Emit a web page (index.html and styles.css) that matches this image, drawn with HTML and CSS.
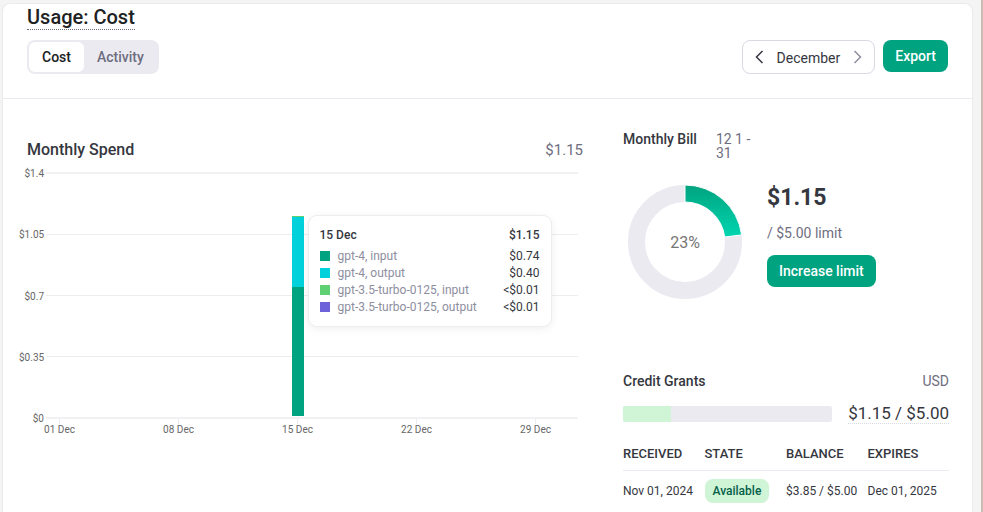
FILE: index.html
```html
<!DOCTYPE html>
<html lang="en">
<head>
  <meta charset="UTF-8" />
  <meta name="viewport" content="width=device-width, initial-scale=1" />
  <title>Usage: Cost</title>
  <link rel="stylesheet" href="styles.css">
</head>
<body>
  <main class="panel">
    <header class="page-header">
      <h1>Usage: Cost</h1>
      <div class="toolbar">
        <div class="toggle">
          <button type="button" class="active">Cost</button>
          <button type="button">Activity</button>
        </div>
        <div class="actions">
          <div class="month-picker">
            <button type="button" aria-label="Previous month">
              <svg width="9" height="14" viewBox="0 0 9 14"><path d="M7.5 1L1.5 7L7.5 13" /></svg>
            </button>
            <span>December</span>
            <button type="button" class="next" aria-label="Next month">
              <svg width="9" height="14" viewBox="0 0 9 14"><path d="M1.5 1L7.5 7L1.5 13" /></svg>
            </button>
          </div>
          <button type="button" class="btn">Export</button>
        </div>
      </div>
    </header>

    <div class="content">
      <section class="spend">
        <div class="spend-head">
          <h2>Monthly Spend</h2>
          <span>$1.15</span>
        </div>
        <div class="chart">
          <div class="y-axis">
            <span>$1.4</span>
            <span>$1.05</span>
            <span>$0.7</span>
            <span>$0.35</span>
            <span>$0</span>
          </div>
          <div class="plot">
            <div class="lines"><i></i><i></i><i></i><i></i><i></i></div>
            <div class="days">
              <div class="bar" style="height: 82%">
                <div class="seg gpt35-in" style="flex-grow: 1"></div>
                <div class="seg gpt4-out" style="flex-grow: 70"></div>
                <div class="seg gpt4-in" style="flex-grow: 130"></div>
                <div class="tooltip">
                  <div class="tooltip-head"><span>15 Dec</span><span>$1.15</span></div>
                  <ul>
                    <li><i class="gpt4-in"></i><span>gpt-4, input</span><b>$0.74</b></li>
                    <li><i class="gpt4-out"></i><span>gpt-4, output</span><b>$0.40</b></li>
                    <li><i class="gpt35-in"></i><span>gpt-3.5-turbo-0125, input</span><b>&lt;$0.01</b></li>
                    <li><i class="gpt35-out"></i><span>gpt-3.5-turbo-0125, output</span><b>&lt;$0.01</b></li>
                  </ul>
                </div>
              </div>
            </div>
          </div>
          <div class="x-axis">
            <span class="d1">01 Dec</span>
            <span class="d8">08 Dec</span>
            <span class="d15">15 Dec</span>
            <span class="d22">22 Dec</span>
            <span class="d29">29 Dec</span>
          </div>
        </div>
      </section>

      <aside class="side">
        <section class="bill">
          <div class="bill-head">
            <h3>Monthly Bill</h3>
            <span>12 1 - 31</span>
          </div>
          <div class="bill-body">
            <svg class="donut" width="124" height="124" viewBox="0 0 124 124" role="img" aria-label="23% of limit used">
              <defs>
                <linearGradient id="used" x1="0" y1="0" x2="0" y2="1">
                  <stop offset="0" stop-color="#00a37f" />
                  <stop offset="1" stop-color="#00d6b0" />
                </linearGradient>
              </defs>
              <circle cx="62" cy="62" r="48.5" fill="none" stroke="#ebeaf1" stroke-width="17" />
              <path d="M62 5A57 57 0 0 1 118.6 54.9L101.7 57A40 40 0 0 0 62 22Z" fill="url(#used)" stroke="#fff" />
              <text x="62" y="68" text-anchor="middle">23%</text>
            </svg>
            <div class="bill-info">
              <strong>$1.15</strong>
              <span>/ $5.00 limit</span>
              <button type="button" class="btn">Increase limit</button>
            </div>
          </div>
        </section>

        <section class="grants">
          <div class="grants-head">
            <h3>Credit Grants</h3>
            <span>USD</span>
          </div>
          <div class="grants-usage">
            <div class="progress"><div style="width: 23%"></div></div>
            <span>$1.15 / $5.00</span>
          </div>
          <table>
            <thead>
              <tr><th>RECEIVED</th><th>STATE</th><th>BALANCE</th><th>EXPIRES</th></tr>
            </thead>
            <tbody>
              <tr>
                <td>Nov 01, 2024</td>
                <td><span class="badge">Available</span></td>
                <td>$3.85 / $5.00</td>
                <td>Dec 01, 2025</td>
              </tr>
            </tbody>
          </table>
        </section>
      </aside>
    </div>
  </main>
</body>
</html>
```
FILE: styles.css
```css
* {
  box-sizing: border-box;
}
body {
  min-height: 100vh;
  margin: 0;
  padding: 3px 8px 0 2px;
  background: #f4f4f4;
  border-right: 2px solid #cdbab3;
  color: #353740;
  font-family: Roboto, "Liberation Sans", sans-serif;
  font-size: 14px;
  line-height: 20px;
}
h1, h2, h3, ul {
  margin: 0;
  padding: 0;
}
h1, h2, h3 {
  font-weight: 500;
}
button {
  font: inherit;
  border: none;
  cursor: pointer;
}
.panel {
  min-height: calc(100vh - 3px);
  background: #fff;
  border: 1px solid #ebebed;
  border-bottom: none;
  border-radius: 8px 8px 0 0;
}

/* header */
.page-header {
  padding: 0 24px 24px;
  border-bottom: 1px solid #ebeaf1;
}
h1 {
  width: fit-content;
  margin-bottom: 10px;
  padding-top: 1px;
  color: #202123;
  font-size: 20px;
  line-height: 24px;
  border-bottom: 1px dotted #6e6e80;
}
.toolbar, .actions {
  display: flex;
  justify-content: space-between;
  align-items: flex-start;
  gap: 8px;
}
.toggle {
  display: flex;
  padding: 2px;
  background: #ebeaf1;
  border-radius: 8px;
}
.toggle button {
  height: 30px;
  padding: 0 13px;
  background: none;
  border-radius: 6px;
  color: #6e6e80;
  font-weight: 500;
}
.toggle .active {
  background: #fff;
  color: #202123;
}
.month-picker {
  display: flex;
  align-items: center;
  height: 34px;
  border: 1px solid #d9d9e3;
  border-radius: 8px;
}
.month-picker button {
  display: flex;
  padding: 0 12px;
  background: none;
}
.month-picker span {
  padding: 2px 1px 0;
}
.month-picker path {
  fill: none;
  stroke: #353740;
  stroke-width: 1.5;
}
.month-picker .next path {
  stroke: #8e8ea0;
}
.btn {
  height: 32px;
  padding: 0 12px;
  background: #00a37f;
  border-radius: 8px;
  color: #fff;
  font-weight: 500;
}

.content {
  display: grid;
  grid-template-columns: minmax(0, 1fr) 326px;
  gap: 40px;
  padding: 33px 23px 0 24px;
}

/* monthly spend */
.spend {
  padding-top: 8px;
}
.spend-head {
  display: flex;
  justify-content: space-between;
  font-size: 15px;
}
.spend-head h2 {
  font-size: 16px;
}
.spend-head span {
  color: #6e6e80;
}
.chart {
  display: grid;
  grid-template-columns: 25px minmax(0, 1fr);
  margin: 12px 5px 0 -8px;
  color: #666;
  font-size: 10px;
  line-height: 12px;
}
.y-axis {
  display: flex;
  flex-direction: column;
  justify-content: space-between;
  height: 257px;
  margin: -4px 0 -6px;
  text-align: right;
}
.plot {
  display: grid;
  height: 247px;
  margin-left: 2px;
}
.lines, .days {
  grid-area: 1 / 1;
}
.lines {
  display: flex;
  flex-direction: column;
  justify-content: space-between;
}
.lines i {
  height: 1px;
  background: #ededf0;
}
.lines i:first-child, .lines i:last-child {
  height: 2px;
  background: #f1f1f3;
}
.days, .x-axis {
  display: grid;
  grid-template-columns: repeat(31, minmax(0, 1fr));
  padding-left: 5px;
}
.days {
  padding-bottom: 3px;
  align-items: end;
}
.bar {
  grid-column: 15;
  position: relative;
  display: flex;
  flex-direction: column;
  width: 12px;
  justify-self: center;
}
.gpt4-in {
  background: #00a37f;
}
.gpt4-out {
  background: #00d1db;
}
.gpt35-in {
  background: #5fd173;
}
.gpt35-out {
  background: #6e62db;
}
.x-axis {
  grid-column: 2;
  margin-left: 2px;
}
.x-axis span {
  justify-self: center;
  white-space: nowrap;
}
.x-axis span::before {
  content: "";
  display: block;
  width: 1px;
  height: 5px;
  margin: 0 auto;
  background: #ebeaf1;
}
.d1 {
  grid-column: 1;
}
.d8 {
  grid-column: 8;
}
.d15 {
  grid-column: 15;
}
.d22 {
  grid-column: 22;
}
.d29 {
  grid-column: 29;
}
.tooltip {
  position: absolute;
  top: 0;
  left: 17px;
  width: 242px;
  padding: 11px 11px 10px;
  background: #fff;
  border-radius: 8px;
  box-shadow: 0 0 0 1px #ececf1, 0 2px 10px rgba(0, 0, 0, 0.08);
  color: #353740;
  font-size: 12px;
  line-height: 17px;
}
.tooltip-head {
  display: flex;
  justify-content: space-between;
  margin-bottom: 4px;
  font-weight: 500;
}
.tooltip li {
  display: flex;
  align-items: center;
}
.tooltip li i {
  width: 10px;
  height: 10px;
  margin-right: 8px;
}
.tooltip li span {
  flex: 1;
  color: #8e8ea0;
}
.tooltip li b {
  font-weight: 400;
}

/* monthly bill */
h3 {
  font-size: 14px;
}
.bill-head {
  display: flex;
  gap: 19px;
  line-height: 14px;
}
.bill-head h3 {
  line-height: 14px;
}
.bill-head span {
  width: 36px;
  color: #6e6e80;
}
.bill-body {
  display: flex;
  align-items: flex-start;
  gap: 20px;
  margin-top: 20px;
}
.donut text {
  fill: #767676;
  font-size: 16px;
}
.bill-info {
  display: flex;
  flex-direction: column;
  align-items: flex-start;
}
.bill-info strong {
  margin-top: 4px;
  font-size: 23px;
  line-height: 28px;
}
.bill-info span {
  margin: 11px 0 12px;
  color: #6e6e80;
}

/* credit grants */
.grants {
  margin-top: 67px;
}
.grants-head, .grants-usage {
  display: flex;
  justify-content: space-between;
}
.grants-head span {
  color: #6e6e80;
}
.grants-usage {
  align-items: center;
  gap: 16px;
  margin-top: 12px;
}
.progress {
  flex: 1;
  height: 16px;
  background: #ebeaf1;
  border-radius: 2px;
  overflow: hidden;
}
.progress div {
  height: 100%;
  background: #d0f4d6;
}
.grants-usage span {
  font-size: 17px;
  border-bottom: 1px dotted #d9d9e3;
}
table {
  width: 100%;
  margin-top: 16px;
  border-collapse: collapse;
  table-layout: fixed;
  font-size: 12px;
  white-space: nowrap;
}
th, td {
  padding: 0;
  text-align: left;
}
th {
  height: 30px;
  padding-bottom: 2px;
  border-bottom: 1px solid #ebeaf1;
  font-size: 13px;
  font-weight: 500;
}
td {
  height: 41px;
}
.badge {
  display: inline-block;
  padding: 2px 8px;
  background: #d0f4d6;
  border-radius: 8px;
  color: #05604a;
  font-weight: 500;
}
```
